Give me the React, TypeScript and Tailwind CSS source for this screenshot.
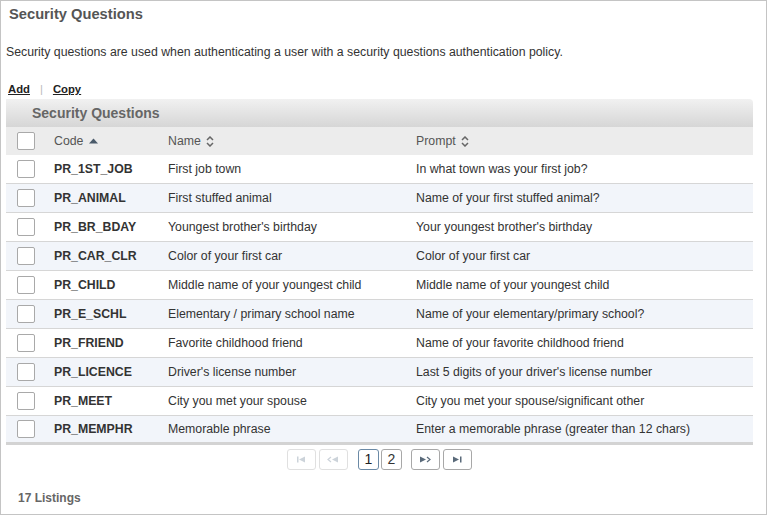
import React from 'react'

const rows = [
  ['PR_1ST_JOB', 'First job town', 'In what town was your first job?'],
  ['PR_ANIMAL', 'First stuffed animal', 'Name of your first stuffed animal?'],
  ['PR_BR_BDAY', "Youngest brother's birthday", "Your youngest brother's birthday"],
  ['PR_CAR_CLR', 'Color of your first car', 'Color of your first car'],
  ['PR_CHILD', 'Middle name of your youngest child', 'Middle name of your youngest child'],
  ['PR_E_SCHL', 'Elementary / primary school name', 'Name of your elementary/primary school?'],
  ['PR_FRIEND', 'Favorite childhood friend', 'Name of your favorite childhood friend'],
  ['PR_LICENCE', "Driver's license number", "Last 5 digits of your driver's license number"],
  ['PR_MEET', 'City you met your spouse', 'City you met your spouse/significant other'],
  ['PR_MEMPHR', 'Memorable phrase', 'Enter a memorable phrase (greater than 12 chars)'],
]

function Checkbox() {
  return <div className="h-[18px] w-[18px] rounded-[2px] border border-[#a9a9a9] bg-white" />
}

function SortBoth() {
  return (
    <svg width="8" height="11" viewBox="0 0 8 11" className="ml-[5px]">
      <path d="M1 4 L4 1 L7 4" fill="none" stroke="#666" strokeWidth="1.5" />
      <path d="M1 7 L4 10 L7 7" fill="none" stroke="#666" strokeWidth="1.5" />
    </svg>
  )
}

function SortUp() {
  return (
    <svg width="9" height="6" viewBox="0 0 9 6" className="ml-[6px]">
      <path d="M0 5.5 L4.5 0.5 L9 5.5 Z" fill="#4a5a6a" />
    </svg>
  )
}

function PageBtn({ children, disabled, active }: { children: React.ReactNode; disabled?: boolean; active?: boolean }) {
  return (
    <div
      className={
        'flex h-[21px] items-center justify-center rounded-[3px] border bg-white ' +
        (active
          ? 'border-[#6b8aa6] text-[#222]'
          : disabled
          ? 'border-[#e0e0e0]'
          : 'border-[#a8a8a8] text-[#333]')
      }
    >
      {children}
    </div>
  )
}

export default function App() {
  return (
    <div className="h-[515px] w-[767px] overflow-hidden border border-[#c4c4c4] bg-white font-['Liberation_Sans',Arial,sans-serif] text-[#333]">
      <div className="px-[8px] pt-[2px] text-[14.7px] font-bold text-[#555]">Security Questions</div>

      <p className="mt-[18px] px-[5px] text-[12.3px] text-[#333]">
        Security questions are used when authenticating a user with a security questions authentication policy.
      </p>

      <div className="mt-[20px] flex items-center px-[7px] text-[11.3px] font-bold text-[#222]">
        <span className="underline">Add</span>
        <span className="mx-[10px] font-normal text-[#bbb]">|</span>
        <span className="underline">Copy</span>
      </div>

      <div className="mx-[5px] mt-[1px] w-[747px]">
        <div className="flex h-[28px] items-center rounded-tr-[4px] bg-gradient-to-b from-[#f1f1f1] to-[#d6d6d6] pl-[26px] text-[14px] font-bold text-[#666]">
          Security Questions
        </div>

        <div className="flex h-[28px] items-center bg-[#ececec] text-[12.3px] text-[#555]">
          <div className="flex w-[48px] pl-[11px]">
            <Checkbox />
          </div>
          <div className="flex w-[114px] items-center">
            Code
            <SortUp />
          </div>
          <div className="flex w-[248px] items-center">
            Name
            <SortBoth />
          </div>
          <div className="flex items-center">
            Prompt
            <SortBoth />
          </div>
        </div>

        {rows.map((r, i) => (
          <div
            key={r[0]}
            className={
              'flex h-[29px] items-center border-b text-[12.3px] text-[#333] ' +
              (i === rows.length - 1 ? 'border-b-[3px] border-[#d3d3d3] ' : 'border-[#d6d6d6] ') +
              (i % 2 === 1 ? 'bg-[#f2f5fa]' : 'bg-white')
            }
          >
            <div className="flex w-[48px] pl-[11px]">
              <Checkbox />
            </div>
            <div className="w-[114px] font-bold text-[#333]">{r[0]}</div>
            <div className="w-[248px]">{r[1]}</div>
            <div>{r[2]}</div>
          </div>
        ))}

        <div className="mt-[4px] flex justify-center">
          <div className="flex gap-[3px]">
            <div className="w-[29px]">
              <PageBtn disabled>
                <svg width="11" height="7" viewBox="0 0 11 7">
                  <rect x="1" y="0.5" width="1.5" height="6" fill="#ccd3da" />
                  <path d="M3 3.5 L9 0.5 V6.5 Z" fill="#ccd3da" />
                </svg>
              </PageBtn>
            </div>
            <div className="w-[29px]">
              <PageBtn disabled>
                <svg width="13" height="7" viewBox="0 0 13 7">
                  <path d="M4 1 L1 3.5 L4 6" fill="none" stroke="#ccd3da" strokeWidth="1.2" />
                  <path d="M5 3.5 L11 0.5 V6.5 Z" fill="#ccd3da" />
                </svg>
              </PageBtn>
            </div>
          </div>
          <div className="ml-[10px] flex gap-[2px] text-[14px]">
            <div className="w-[21px]">
              <PageBtn active>1</PageBtn>
            </div>
            <div className="w-[21px]">
              <PageBtn>2</PageBtn>
            </div>
          </div>
          <div className="ml-[9px] flex gap-[3px]">
            <div className="w-[29px]">
              <PageBtn>
                <svg width="13" height="7" viewBox="0 0 13 7">
                  <path d="M1 0.5 L7 3.5 L1 6.5 Z" fill="#5a6a7a" />
                  <path d="M8 1 L11 3.5 L8 6" fill="none" stroke="#5a6a7a" strokeWidth="1.2" />
                </svg>
              </PageBtn>
            </div>
            <div className="w-[29px]">
              <PageBtn>
                <svg width="11" height="7" viewBox="0 0 11 7">
                  <path d="M1 0.5 L7 3.5 L1 6.5 Z" fill="#5a6a7a" />
                  <rect x="8" y="0.5" width="1.5" height="6" fill="#5a6a7a" />
                </svg>
              </PageBtn>
            </div>
          </div>
        </div>
      </div>

      <div className="mt-[19px] pl-[17px] text-[12px] font-bold text-[#666]">17 Listings</div>
    </div>
  )
}
